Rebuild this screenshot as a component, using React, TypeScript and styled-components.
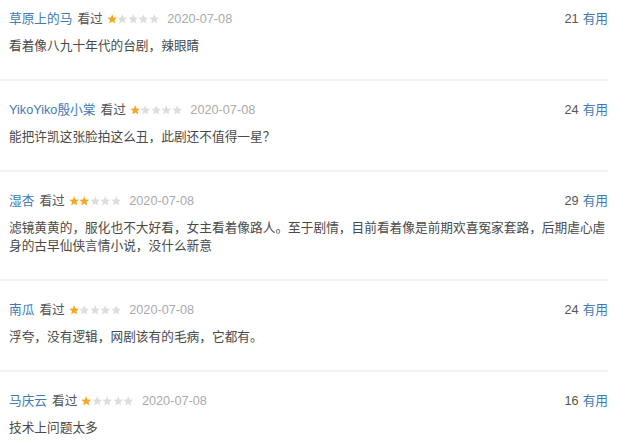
import styled, { createGlobalStyle } from "styled-components";

const GlobalStyle = createGlobalStyle`
  body {
    margin: 0;
    background: #ffffff;
    font-family: "Liberation Sans", "Noto Sans CJK SC", sans-serif;
  }
`;

const List = styled.div`
  width: 608px;
  display: flex;
  flex-direction: column;
`;

// 댓글 한 건
const Item = styled.div`
  padding: 19px 0 24px 9px;
  border-bottom: 2px solid #f2f2f2;
  &:first-child {
    padding-top: 9px;
  }
`;

const Header = styled.div`
  display: flex;
  align-items: center;
  height: 20px;
  font-size: 12.7px;
  line-height: 20px;
`;

const Name = styled.span`
  color: #3f7ab4;
  margin-right: 5px;
`;

const Watched = styled.span`
  color: #555555;
  margin-right: 4px;
`;

const Stars = styled.span`
  display: inline-flex;
  align-items: center;
  margin-right: 8px;
`;

const DateText = styled.span`
  color: #aaaaaa;
`;

const Votes = styled.span`
  margin-left: auto;
  color: #555555;
  b {
    font-weight: normal;
    color: #3f7ab4;
    margin-left: 4px;
  }
`;

const Body = styled.p`
  margin: 8px 0 0;
  font-size: 12.7px;
  line-height: 18px;
  color: #494949;
`;

const Star = ({ on }: { on: boolean }) => (
  <svg width="10.5" height="10" viewBox="0 0 21 20">
    <polygon
      points="10.5,0.5 13.3,7 20.3,7.4 14.9,11.9 16.6,18.8 10.5,15 4.4,18.8 6.1,11.9 0.7,7.4 7.7,7"
      fill={on ? "#f5a623" : "#dddddd"}
    />
  </svg>
);

interface Comment {
  name: string;
  rating: number;
  date: string;
  votes: number;
  text: string;
}

const comments: Comment[] = [
  { name: "草原上的马", rating: 1, date: "2020-07-08", votes: 21, text: "看着像八九十年代的台剧，辣眼睛" },
  { name: "YikoYiko殷小棠", rating: 1, date: "2020-07-08", votes: 24, text: "能把许凯这张脸拍这么丑，此剧还不值得一星？" },
  {
    name: "湿杏",
    rating: 2,
    date: "2020-07-08",
    votes: 29,
    text: "滤镜黄黄的，服化也不大好看，女主看着像路人。至于剧情，目前看着像是前期欢喜冤家套路，后期虐心虐身的古早仙侠言情小说，没什么新意",
  },
  { name: "南瓜", rating: 1, date: "2020-07-08", votes: 24, text: "浮夸，没有逻辑，网剧该有的毛病，它都有。" },
  { name: "马庆云", rating: 1, date: "2020-07-08", votes: 16, text: "技术上问题太多" },
];

export default () => {
  return (
    <List>
      <GlobalStyle />
      {comments.map((c, i) => (
        <Item key={i}>
          <Header>
            <Name>{c.name}</Name>
            <Watched>看过</Watched>
            <Stars>
              {[0, 1, 2, 3, 4].map((n) => (
                <Star key={n} on={n < c.rating} />
              ))}
            </Stars>
            <DateText>{c.date}</DateText>
            <Votes>
              {c.votes}
              <b>有用</b>
            </Votes>
          </Header>
          <Body>{c.text}</Body>
        </Item>
      ))}
    </List>
  );
};
